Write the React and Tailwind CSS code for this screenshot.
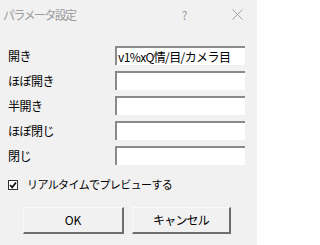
import { useState } from 'react'

const fields = [
  { label: '開き', value: 'v1%xQ情/目/カメラ目' },
  { label: 'ほぼ開き', value: '' },
  { label: '半開き', value: '' },
  { label: 'ほぼ閉じ', value: '' },
  { label: '閉じ', value: '' },
]

const font = { fontFamily: '"Noto Sans CJK JP", "Liberation Sans", sans-serif' }

const App = () => {
  const [preview, setPreview] = useState(true)

  return (
    <div
      className="w-[257px] h-[245px] bg-[#f1f1f1] text-black flex flex-col overflow-hidden"
      style={font}
    >
      {/* Title bar */}
      <div className="h-[29px] flex items-center pl-[3px] text-[#9b9b9b]">
        <span className="w-[178px] text-[12px] tracking-[-1.6px] leading-none">パラメータ設定</span>
        <span className="w-[7px] text-[12px] leading-none text-center">?</span>
        <svg className="ml-[44px]" width="11" height="11" viewBox="0 0 11 11">
          <path d="M0.5 0.5 L10.5 10.5 M10.5 0.5 L0.5 10.5" stroke="#a0a0a0" strokeWidth="1" />
        </svg>
      </div>

      {/* Fields */}
      <div className="flex flex-col gap-[6px] mt-[17px] pl-[8px]">
        {fields.map((f) => (
          <div key={f.label} className="flex items-center h-[19px]">
            <span className="w-[107px] text-[12px] tracking-[-0.5px] leading-none">{f.label}</span>
            <div className="w-[130px] h-[19px] bg-white border-t-2 border-l-2 border-t-[#8a8a8a] border-l-[#8a8a8a] flex items-center pl-[1px] overflow-hidden">
              <span className="text-[12px] tracking-[-0.6px] leading-none whitespace-nowrap">{f.value}</span>
            </div>
          </div>
        ))}
      </div>

      {/* Realtime preview */}
      <label className="flex items-center mt-[14px] pl-[8px] h-[11px]">
        <span
          onClick={() => setPreview(!preview)}
          className="w-[10px] h-[10px] bg-white border border-[#333] flex items-center justify-center"
        >
          {preview && (
            <svg width="8" height="8" viewBox="0 0 8 8">
              <path d="M1 4 L3.2 6.3 L7 1.5" fill="none" stroke="#111" strokeWidth="1.8" />
            </svg>
          )}
        </span>
        <span className="ml-[9px] text-[11px] tracking-[-0.6px] leading-none">リアルタイムでプレビューする</span>
      </label>

      {/* Buttons */}
      <div className="flex mt-[17px] pl-[23px] gap-[8px]">
        <button className="w-[101px] h-[27px] bg-[#f1f1f1] border-r-2 border-b-2 border-r-[#6e6e6e] border-b-[#6e6e6e] border-t border-l border-t-[#fafafa] border-l-[#fafafa] text-[12px] leading-none">
          OK
        </button>
        <button className="w-[99px] h-[27px] bg-[#f1f1f1] border-r-2 border-b-2 border-r-[#6e6e6e] border-b-[#6e6e6e] border-t border-l border-t-[#fafafa] border-l-[#fafafa] text-[12px] tracking-[-0.8px] leading-none">
          キャンセル
        </button>
      </div>
    </div>
  )
}

export default App
